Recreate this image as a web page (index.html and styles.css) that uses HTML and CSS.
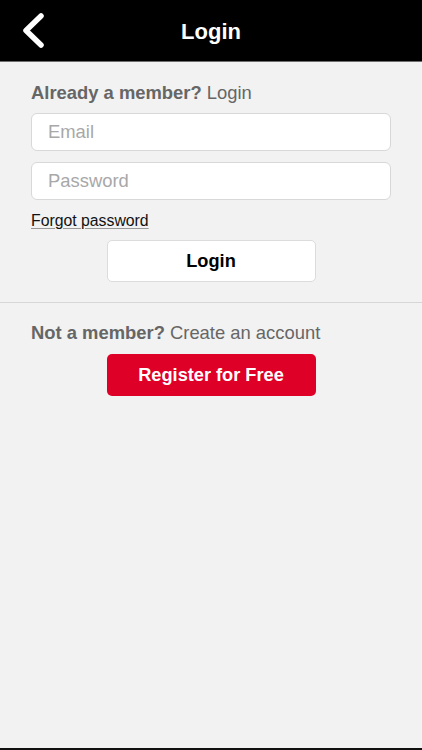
FILE: index.html
```html
<!DOCTYPE html>
<html lang="en">
<head>
<meta charset="utf-8">
<title>Login</title>
<link rel="stylesheet" href="styles.css">
</head>
<body>
<div class="app">
  <header class="topbar">
    <div class="topbar-left">
      <button class="back" aria-label="Back">
        <svg width="24" height="36" viewBox="0 0 24 36" aria-hidden="true">
          <polyline points="19,3 4,17.5 19,32" fill="none" stroke="#fff" stroke-width="5.5" stroke-linecap="round" stroke-linejoin="round"/>
        </svg>
      </button>
    </div>
    <h1 class="title">Login</h1>
    <div class="topbar-right"></div>
  </header>

  <main class="content">
    <section class="login">
      <p class="lead"><strong>Already a member?</strong> Login</p>
      <form class="form">
        <input class="field" type="email" placeholder="Email">
        <input class="field" type="password" placeholder="Password">
        <a class="forgot" href="#">Forgot password</a>
        <button type="button" class="btn btn-white">Login</button>
      </form>
    </section>
    <hr class="divider">
    <section class="register">
      <p class="lead"><strong>Not a member?</strong> Create an account</p>
      <button type="button" class="btn btn-red">Register for Free</button>
    </section>
  </main>
  <div class="bottom-bar"></div>
</div>
</body>
</html>
```

FILE: styles.css
```css
* { box-sizing: border-box; }
html, body { margin: 0; padding: 0; height: 100%; }
body {
  background: #f2f2f2;
  font-family: "Liberation Sans", Arial, sans-serif;
}
.app {
  min-height: 750px;
  height: 750px;
  display: flex;
  flex-direction: column;
}
.topbar {
  height: 62px;
  background: #000;
  border-bottom: 1px solid #6e6e6e;
  display: grid;
  grid-template-columns: 1fr auto 1fr;
  align-items: center;
}
.topbar-left { display: flex; align-items: center; padding-left: 22px; }
.back {
  background: none;
  border: 0;
  padding: 0;
  margin: 0;
  width: 24px;
  height: 36px;
  display: block;
  margin-top: 1px;
}
.back svg { display: block; }
.title {
  margin: 2px 0 0 0;
  color: #fff;
  font-size: 22px;
  font-weight: bold;
  line-height: 26px;
}
.content { flex: 1; }
.login { padding: 20px 31px 0 31px; }
.lead {
  margin: 0;
  font-size: 18.4px;
  line-height: 22px;
  color: #666;
}
.lead strong { font-weight: bold; }
.form { display: flex; flex-direction: column; margin-top: 9px; }
.field {
  height: 38px;
  width: 100%;
  border: 1px solid #d8d8d8;
  border-radius: 6px;
  background: #fff;
  padding: 0 16px;
  font-family: inherit;
  font-size: 18.4px;
  color: #333;
  outline: none;
}
.field + .field { margin-top: 11px; }
.field::placeholder { color: #a8a8a8; }
.forgot {
  margin-top: 11px;
  font-size: 15.8px;
  line-height: 20px;
  color: #111;
  text-decoration: underline;
  text-decoration-color: #999;
  text-underline-offset: 2px;
  align-self: flex-start;
}
.btn {
  display: block;
  width: 209px;
  height: 42px;
  border-radius: 5px;
  font-family: inherit;
  font-weight: bold;
  margin-left: auto;
  margin-right: auto;
  padding: 0;
}
.btn-white {
  margin-top: 9px;
  background: #fff;
  border: 1px solid #dcdcdc;
  color: #000;
  font-size: 18.2px;
}
.btn-red {
  margin-top: 10px;
  background: #df0027;
  border: 0;
  color: #fff;
  font-size: 18.2px;
}
.divider {
  margin: 20px 0 0 0;
  border: 0;
  height: 1px;
  background: #d6d6d6;
}
.register { padding: 19px 31px 0 31px; }
.bottom-bar {
  height: 2px;
  background: #111;
}
```
